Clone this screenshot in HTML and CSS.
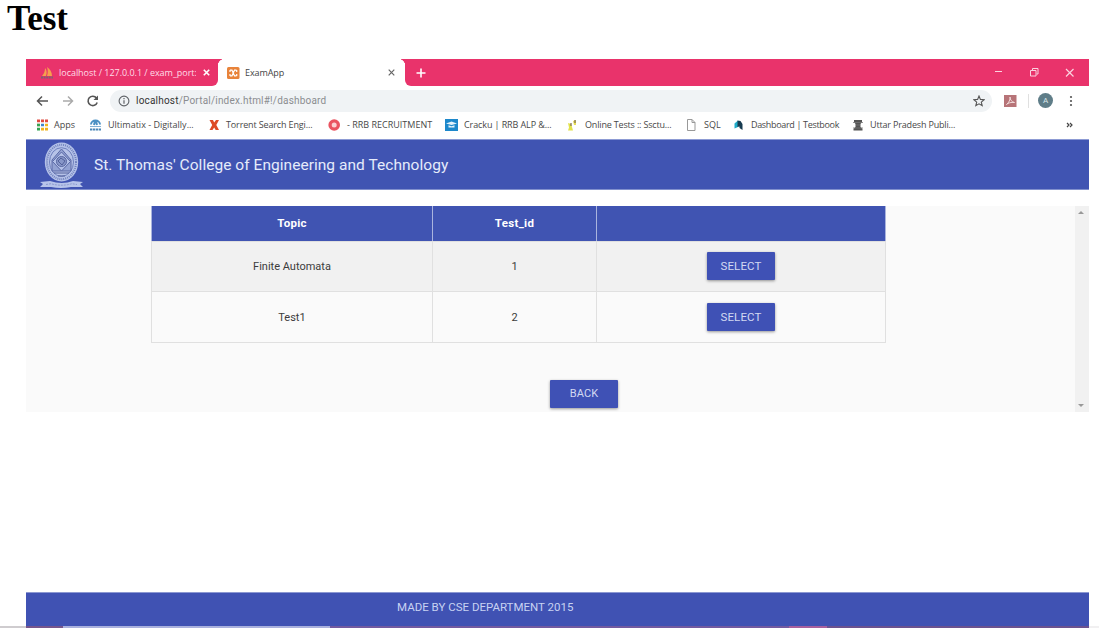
FILE: index.html
```html
<!DOCTYPE html>
<html lang="en">
<head>
<meta charset="utf-8">
<title>Test</title>
<link rel="stylesheet" href="styles.css">
</head>
<body>
<h1 class="title">Test</h1>
<main class="browser">
  <div class="tabs">
    <div class="tab tab-idle">
      <svg class="ico" width="13" height="12" viewBox="0 0 13 12"><path d="M1 9C3 7 4 4 4 1c2 2 2 5 1 8zM6 9c1-3 1-6 0-9 3 2 5 5 5 9z" fill="#f6a04d"/><path d="M0 10.500h12" stroke="#7d6270" stroke-width="2" stroke-dasharray="2 .6"/></svg>
      <span class="tab-name idle-name">localhost / 127.0.0.1 / exam_port:</span>
      <svg class="close" width="7" height="7" viewBox="0 0 7 7"><path d="M.8.8l5.400 5.400M6.200.8L.8 6.200" stroke="#fff" stroke-width="1.600"/></svg>
    </div>
    <div class="tab tab-active">
      <svg class="ico" width="13" height="12" viewBox="0 0 13 12"><rect width="12.500" height="12" rx="1.500" fill="#e8833a"/><path d="M3 3.200h2L6.200 6 5 8.800H3M9.500 3.200h-2L6.200 6l1.300 2.800h2M3 3v2M9.700 3v2M3 7v2M9.700 7v2" fill="none" stroke="#fff" stroke-width="1.200"/></svg>
      <span class="tab-name active-name">ExamApp</span>
      <svg class="close" width="7" height="7" viewBox="0 0 7 7"><path d="M.7.7l5.600 5.600M6.300.7L.7 6.300" stroke="#666" stroke-width="1.200"/></svg>
    </div>
    <div class="tab-rest">
      <svg width="10" height="10" viewBox="0 0 10 10"><path d="M5 .5v9M.5 5h9" stroke="#fff" stroke-width="1.600"/></svg>
      <svg class="window-buttons" width="82" height="12" viewBox="0 0 82 12"><g fill="none" stroke="#fbd3e0"><path d="M1 4.500h7"/><path d="M36.500 3.500h5.500v5.500h-5.500zM38.500 3V1.500h5.500V7H42.500"/><path d="M72 2l7.500 7.500M79.500 2L72 9.500" stroke-width="1.200"/></g></svg>
    </div>
  </div>
  <div class="toolbar">
    <svg class="nav" width="64" height="14" viewBox="0 0 64 14"><g fill="none" stroke-width="1.500"><path d="M12 7H2M6 2.500L1.500 7 6 11.500" stroke="#555"/><path d="M27 7h9.500M32 2.500L36.500 7 32 11.500" stroke="#aaa"/><path d="M60.500 4A4.700 4.700 0 1 0 61.200 8.500" stroke="#555" stroke-width="1.600"/></g><path d="M57.500 6h4.500V1.500z" fill="#555"/></svg>
    <div class="address">
      <svg width="12" height="12" viewBox="0 0 12 12"><circle cx="6" cy="6" r="4.900" fill="none" stroke="#5f6368" stroke-width="1.100"/><path d="M6 5.200v3.600M6 3v1.200" stroke="#5f6368" stroke-width="1.200"/></svg>
      <span class="url"><span class="host">localhost</span>/Portal/index.html#!/dashboard</span>
      <svg class="star" width="12" height="12" viewBox="0 0 12 12"><path d="M6 1l1.400 3.400 3.700.3-2.800 2.400.9 3.600L6 8.800l-3.200 1.900.9-3.600L.9 4.700l3.700-.3z" fill="none" stroke="#555" stroke-width="1.100"/></svg>
    </div>
    <svg class="pdf" width="13" height="12" viewBox="0 0 13 12"><rect width="12.500" height="12" fill="#b77478"/><path d="M2.500 9.500C5 7.500 6.500 4.500 6 2c0 3 2 5 4.500 5.500C7 7 4 8 2.500 9.500z" fill="none" stroke="#f2dcdc"/></svg>
    <span class="divider"></span>
    <span class="avatar">A</span>
    <svg class="more" width="4" height="12" viewBox="0 0 4 12"><g fill="#555"><circle cx="2" cy="2" r="1.100"/><circle cx="2" cy="6" r="1.100"/><circle cx="2" cy="10" r="1.100"/></g></svg>
  </div>
  <div class="bookmarks">
    <div class="mark"><svg width="12" height="12" viewBox="0 0 12 12"><path d="M1 2h3M5 2h3M9 2h3M1 6h3" stroke="#e04a40" stroke-width="3"/><path d="M5 6h3" stroke="#4285c9" stroke-width="3"/><path d="M9 6h3M5 10h3M9 10h3" stroke="#f0b41c" stroke-width="3"/><path d="M1 6h3M1 10h3" stroke="#35a554" stroke-width="3"/><path d="M4.500 0v12M8.500 0v12M0 4h12M0 8h12" stroke="#fff"/></svg><span class="m-apps">Apps</span></div>
    <div class="mark"><svg width="13" height="12" viewBox="0 0 13 12"><path d="M2 5.500a4.500 4 0 0 1 9 0M5 6l1-4h1l1 4" fill="none" stroke="#4c91c4" stroke-width="2"/><path d="M1 7.500h11" stroke="#83b2d6"/><path d="M1 10.500h11" stroke="#4c88b8" stroke-width="2" stroke-dasharray="2.300 .6"/></svg><span class="m-ult">Ultimatix - Digitally...</span></div>
    <div class="mark"><svg width="12" height="12" viewBox="0 0 12 12"><path d="M1.500 1h3.500L6.200 3.500 8 1h3L8.300 6l2.700 5H7.700L6.200 8.500 4.500 11h-3l2.700-5z" fill="#dd4a25"/></svg><span class="m-tor">Torrent Search Engi...</span></div>
    <div class="mark"><svg width="13" height="12" viewBox="0 0 13 12"><circle cx="6.200" cy="6" r="5.800" fill="#ea5360"/><circle cx="6.200" cy="6" r="2.500" fill="#fbd0d2"/></svg><span class="m-rrb">- RRB RECRUITMENT</span></div>
    <div class="mark"><svg width="13" height="12" viewBox="0 0 13 12"><rect width="13" height="12" fill="#1d88cb"/><path d="M1 4.500l5.500-2 5.500 2-5.500 1.500zM3.500 6.200v2.300h6V6.200l-3 1z" fill="#e4f3fc"/></svg><span class="m-cra">Cracku | RRB ALP &amp;...</span></div>
    <div class="mark"><svg width="12" height="12" viewBox="0 0 12 12"><path d="M1 4l3 1 1 3 1 3.500H1l1-3z" fill="#e2e24a"/><path d="M6 2l3-1v5H7z" fill="#e8df56"/><path d="M8 1v3M4 4v3" stroke="#765" stroke-width="1.200"/></svg><span class="m-onl">Online Tests :: Ssctu...</span></div>
    <div class="mark"><svg width="12" height="12" viewBox="0 0 12 12"><path d="M1.500.5h4.500l3 3v8H1.500zM6 .5v3h3" fill="#fff" stroke="#999"/></svg><span class="m-sql">SQL</span></div>
    <div class="mark"><svg width="12" height="12" viewBox="0 0 12 12"><path d="M5 1.500L1.500 4.500v5L5 8z" fill="#20acc9"/><path d="M4.500 1.500L7.500 2 9.500 5v6L6.500 9V7.500L4.500 8z" fill="#173b50"/></svg><span class="m-dash">Dashboard | Testbook</span></div>
    <div class="mark"><svg width="12" height="12" viewBox="0 0 12 12"><path d="M2 1h8v2L8.500 5v3l2 2v1.500H1.500V10l2-2V5L2 3z" fill="#555"/><path d="M1 3.500h10M4 6h4M1 9h10" stroke="#777" stroke-width=".8"/></svg><span class="m-utt">Uttar Pradesh Publi...</span></div>
    <svg class="overflow" width="7" height="6" viewBox="0 0 7 6"><path d="M1 1l2 2-2 2M4 1l2 2-2 2" fill="none" stroke="#444" stroke-width="1.200"/></svg>
  </div>
  <header class="app-header">
    <svg class="crest" width="46" height="48" viewBox="0 0 46 48"><ellipse cx="22.500" cy="21" rx="16.700" ry="19.500" fill="#b4c1e8"/><ellipse cx="22.500" cy="21" rx="14.500" ry="17.200" fill="none" stroke="#7283bd" stroke-width="2" stroke-dasharray="1 1"/><ellipse cx="22.500" cy="21" rx="12" ry="14.300" fill="#b7c3e8" stroke="#6f80bd"/><path d="M22.500 8L32 19v11H13V19z" fill="#93a2d2" stroke="#5a69a6"/><path d="M22.500 11l9 9.500-9 9.500-9-9.500z" fill="#b3c0e7" stroke="#5a69a6"/><circle cx="22.500" cy="20.500" r="5" fill="#8796c8" stroke="#5866a0"/><path d="M19 20l3-3 4 3-3 4zM15 32h15M19 35h7" fill="none" stroke="#53619a"/><path d="M1 41l10-1q12 4 23 0l10 1-3 2 3 3H32q-10 2-20 0H1l3-3z" fill="#b7c4ea"/><path d="M7 43.500l5-.8q10 3 21 0l5 .8" fill="none" stroke="#8998cd" stroke-dasharray="2 1"/></svg>
    <span class="college">St. Thomas' College of Engineering and Technology</span>
  </header>
  <section class="content">
    <div class="page">
      <table class="tests">
        <colgroup><col class="c-topic"><col class="c-id"><col class="c-action"></colgroup>
        <thead><tr><th>Topic</th><th>Test_id</th><th></th></tr></thead>
        <tbody>
          <tr><td>Finite Automata</td><td>1</td><td><button class="btn">SELECT</button></td></tr>
          <tr><td>Test1</td><td>2</td><td><button class="btn">SELECT</button></td></tr>
        </tbody>
      </table>
      <button class="btn back">BACK</button>
    </div>
    <div class="scrollbar"><i class="arrow up"></i><i class="arrow down"></i></div>
  </section>
  <footer class="footer"><span>MADE BY CSE DEPARTMENT 2015</span></footer>
</main>
<div class="edge"><i class="e1"></i><i class="e2"></i><i class="e3"></i><i class="e4"></i><i class="e5"></i><i class="e6"></i><i class="e7"></i></div>
</body>
</html>
```
FILE: styles.css
```css
* { box-sizing: border-box; }
body { margin: 0; height: 628px; overflow: hidden; background: #fff; font-family: Roboto, "Liberation Sans", sans-serif; display: flex; flex-direction: column; }
svg { display: block; flex: none; }
.title { margin: 0; padding-left: 7px; height: 59px; font: bold 35px/37px "Liberation Serif", serif; color: #000; flex: none; }
.browser { width: 1063px; height: 567px; margin-left: 26px; display: flex; flex-direction: column; flex: none; }
.tabs { display: flex; height: 27px; background: #fff; flex: none; }
.tab { display: flex; align-items: center; height: 27px; font-family: "Open Sans", sans-serif; font-size: 9px; white-space: nowrap; }
.tab-idle { width: 192px; padding-left: 15px; background: #e9336b; border-radius: 0 0 6px 0; color: #ffdce7; }
.tab-active { width: 187px; padding-left: 9px; color: #444; background: radial-gradient(circle at 7px 7px, #fff 7px, #e9336b 7.500px) 0 0 / 7px 7px no-repeat, radial-gradient(circle at 0 7px, #fff 7px, #e9336b 7.500px) 100% 0 / 7px 7px no-repeat, #fff; }
.tab-name { margin-left: 5px; }
.idle-name { width: 137px; overflow: hidden; letter-spacing: -.03px; }
.active-name { width: 141px; letter-spacing: -.1px; }
.close { margin-left: 7px; }
.tab-active .close { margin-left: 2px; }
.tab-rest { flex: 1; display: flex; align-items: center; justify-content: space-between; padding: 0 13px 0 11px; background: #e9336b; border-radius: 0 0 0 6px; }
.toolbar { display: flex; align-items: center; height: 29px; flex: none; }
.nav { margin-left: 10px; }
.address { display: flex; align-items: center; width: 882px; height: 22px; margin-left: 10px; padding: 0 7px 0 8px; border-radius: 11px; background: #f0f3f5; }
.url { margin-left: 6px; font-size: 10px; letter-spacing: .2px; color: #8b8d90; white-space: nowrap; }
.host { color: #333; }
.star { margin-left: auto; }
.pdf { margin-left: 12px; }
.divider { width: 1px; height: 14px; margin-left: 11px; background: #e0e0e0; }
.avatar { width: 15px; height: 15px; margin-left: 9px; border-radius: 50%; background: #5f7d88; color: #dce8ec; font-size: 8px; line-height: 15px; text-align: center; }
.more { margin-left: 16px; }
.bookmarks { display: grid; grid-template-columns: 53px 119px 120px 117px 122px 119px 47px 119px 210px 12px; align-items: center; height: 24px; padding: 0 0 5px 10px; flex: none; }
.mark { display: flex; align-items: center; font: 9px/14px "Open Sans", sans-serif; color: #484848; white-space: nowrap; }
.mark svg { margin-right: 6px; }
.m-tor { letter-spacing: -.14px; }
.m-cra { letter-spacing: -.1px; }
.m-onl { letter-spacing: -.17px; }
.m-dash { letter-spacing: -.33px; }
.m-utt { letter-spacing: -.17px; }
.overflow { margin-left: 4px; }
.app-header { display: flex; align-items: center; height: 51px; background: #4054b2; flex: none; border-top: 1px solid #8d9bd4; border-bottom: 1px solid #8190cd; }
.crest { margin-left: 13px; }
.college { margin-left: 9px; font-size: 15.500px; letter-spacing: .04px; color: #e5ebfb; white-space: nowrap; }
.content { display: flex; height: 206px; margin-top: 16px; background: #fafafa; flex: none; }
.page { width: 1049px; padding-left: 125px; }
.tests { width: 735px; height: 137px; table-layout: fixed; border-collapse: collapse; text-align: center; font-size: 11px; color: #3c3c3c; }
.c-topic { width: 281px; }
.c-id { width: 164px; }
.tests th, .tests td { padding: 0; border: 1px solid #e0e0e0; }
.tests th { height: 35px; background: #4054b2; color: #fff; font-size: 11.500px; letter-spacing: .3px; border-top: 0; border-left-color: #aab4de; border-right-color: #aab4de; }
.tests td { height: 50px; }
.btn { display: block; width: 68px; height: 28px; margin: 0 auto; padding: 0; border: 0; border-radius: 1px; background: #3f51b5; color: #d3d9f2; font: 11.500px/28px Roboto, "Liberation Sans", sans-serif; letter-spacing: .1px; box-shadow: 0 1px 3px rgba(0, 0, 0, .4); }
.tests tbody tr:first-child { background: #f1f1f1; }
.back { margin: 37px 0 0 399px; font-size: 11px; }
.scrollbar { display: flex; flex-direction: column; justify-content: space-between; align-items: center; width: 14px; padding: 5px 2px 5px 0; background: #f1f1f1; }
.arrow { border: 3px solid transparent; }
.up { border-top: 0; border-bottom-color: #999; }
.down { border-bottom: 0; border-top-color: #999; }
.footer { height: 34px; margin-top: auto; padding-left: 371px; background: #4052b3; color: #c8d2f2; font-size: 11.500px; line-height: 29px; white-space: nowrap; border-top: 1px solid #8c98d2; flex: none; }
.edge { display: flex; height: 2px; flex: none; }
.e1 { width: 26px; background: #cfcccf; }
.e2 { width: 37px; background: #76558c; }
.e3 { width: 267px; background: #aab1de; }
.e4 { width: 459px; background: #735aa0; }
.e5 { width: 38px; background: #a8609e; }
.e6 { width: 262px; background: #6c528f; }
.e7 { width: 10px; background: #f1f0f1; }
```
